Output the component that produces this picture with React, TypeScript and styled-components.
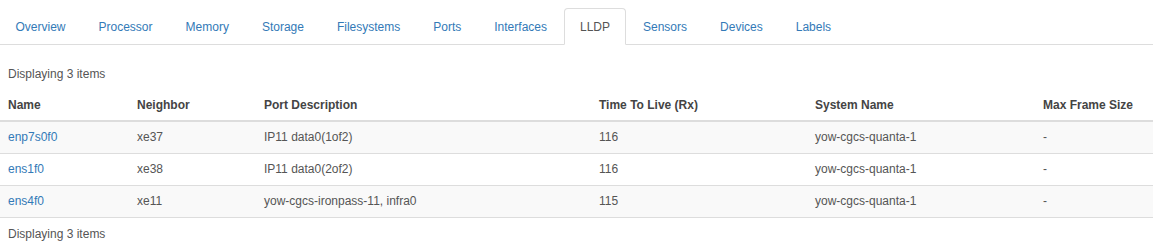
import * as React from 'react';
import styled, { createGlobalStyle } from 'styled-components';

const GlobalStyle = createGlobalStyle`
    body {
        margin: 0;
        font-family: "Liberation Sans", Arial, Helvetica, sans-serif;
        font-size: 12px;
        color: #555;
        background: #fff;
    }
`;

const Page = styled.div`
    padding-top: 8px;
`;

const Tabs = styled.ul`
    display: flex;
    margin: 0;
    padding: 0;
    list-style: none;
    border-bottom: 1px solid #ddd;
`;

const Tab = styled.li<{ $active?: boolean }>`
    margin-right: 2px;
    margin-bottom: -1px;
    padding: 10px 14.5px 8px;
    line-height: 17px;
    border: 1px solid ${(p) => (p.$active ? '#ddd' : 'transparent')};
    border-bottom-color: transparent;
    border-radius: 4px 4px 0 0;
    background: ${(p) => (p.$active ? '#fff' : 'transparent')};
    color: ${(p) => (p.$active ? '#555' : '#337ab7')};
    cursor: ${(p) => (p.$active ? 'default' : 'pointer')};
`;

const Table = styled.table`
    width: 100%;
    margin-top: 13px;
    table-layout: fixed;
    border-collapse: separate;
    border-spacing: 0;
`;

const InfoCell = styled.td`
    padding: 9px 8px 7px;
    line-height: 15px;
    text-align: left;
`;

const HeadCell = styled.th`
    padding: 9px 8px 7px;
    line-height: 15px;
    text-align: left;
    font-weight: bold;
    color: #444;
    border-bottom: 2px solid #ddd;
`;

const Row = styled.tr<{ $striped?: boolean }>`
    background: ${(p) => (p.$striped ? '#f9f9f9' : '#fff')};
`;

const Cell = styled.td`
    padding: 8px;
    line-height: 15px;
    border-bottom: 1px solid #ddd;
    white-space: nowrap;
    overflow: hidden;
`;

const NameLink = styled.a`
    color: #337ab7;
    text-decoration: none;
`;

const tabs = ['Overview', 'Processor', 'Memory', 'Storage', 'Filesystems', 'Ports', 'Interfaces', 'LLDP', 'Sensors', 'Devices', 'Labels'];

const columns = [
    { title: 'Name', width: 129 },
    { title: 'Neighbor', width: 127 },
    { title: 'Port Description', width: 335 },
    { title: 'Time To Live (Rx)', width: 216 },
    { title: 'System Name', width: 228 },
    { title: 'Max Frame Size', width: 118 },
];

const rows = [
    { name: 'enp7s0f0', neighbor: 'xe37', port: 'IP11 data0(1of2)', ttl: '116', system: 'yow-cgcs-quanta-1', frame: '-' },
    { name: 'ens1f0', neighbor: 'xe38', port: 'IP11 data0(2of2)', ttl: '116', system: 'yow-cgcs-quanta-1', frame: '-' },
    { name: 'ens4f0', neighbor: 'xe11', port: 'yow-cgcs-ironpass-11, infra0', ttl: '115', system: 'yow-cgcs-quanta-1', frame: '-' },
];

export default function App() {
    return (
        <Page>
            <GlobalStyle />
            <Tabs>
                {tabs.map((t) => (
                    <Tab key={t} $active={t === 'LLDP'}>{t}</Tab>
                ))}
            </Tabs>
            <Table>
                <colgroup>
                    {columns.map((c) => (
                        <col key={c.title} style={{ width: c.width }} />
                    ))}
                </colgroup>
                <thead>
                    <tr>
                        <InfoCell colSpan={6}>Displaying 3 items</InfoCell>
                    </tr>
                    <tr>
                        {columns.map((c) => (
                            <HeadCell key={c.title}>{c.title}</HeadCell>
                        ))}
                    </tr>
                </thead>
                <tbody>
                    {rows.map((r, i) => (
                        <Row key={r.name} $striped={i % 2 === 0}>
                            <Cell><NameLink href="#">{r.name}</NameLink></Cell>
                            <Cell>{r.neighbor}</Cell>
                            <Cell>{r.port}</Cell>
                            <Cell>{r.ttl}</Cell>
                            <Cell>{r.system}</Cell>
                            <Cell>{r.frame}</Cell>
                        </Row>
                    ))}
                </tbody>
                <tfoot>
                    <tr>
                        <InfoCell colSpan={6}>Displaying 3 items</InfoCell>
                    </tr>
                </tfoot>
            </Table>
        </Page>
    );
}
